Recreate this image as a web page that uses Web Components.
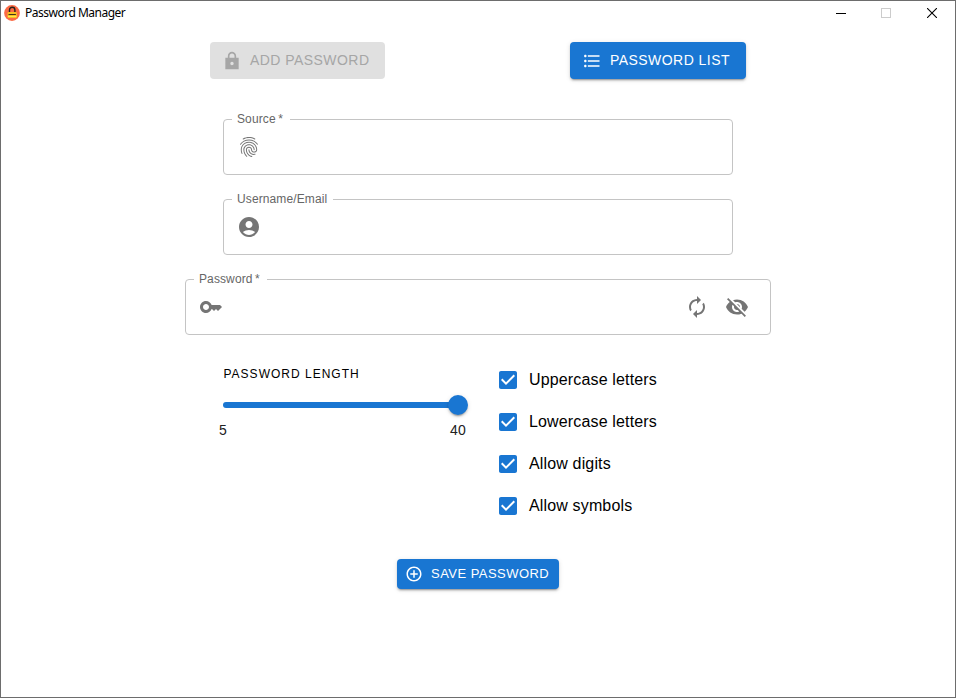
<!DOCTYPE html>
<html lang="en"><head><meta charset="utf-8"><title>Password Manager</title>
<style>
html,body{margin:0;height:100%}
body{font-family:"Liberation Sans",Arial,sans-serif;background:#fff;color:#000}
</style></head><body>
<password-app></password-app>
<script>
const ICONS={
lock:'M20 8h-3V6.21c0-2.61-1.91-4.94-4.51-5.19C9.51.74 7 3.08 7 6v2H4v14h16V8zm-8 9c-1.1 0-2-.9-2-2s.9-2 2-2 2 .9 2 2-.9 2-2 2zM9 8V6c0-1.66 1.34-3 3-3s3 1.34 3 3v2H9z',
list:'M4 10.5c-.83 0-1.5.67-1.5 1.5s.67 1.5 1.5 1.5 1.5-.67 1.5-1.5-.67-1.5-1.5-1.5zm0-6c-.83 0-1.5.67-1.5 1.5S3.17 7.5 4 7.5 5.500 6.830 5.500 6 4.830 4.500 4 4.500zm0 12c-.83 0-1.5.68-1.5 1.500s.68 1.500 1.500 1.500 1.500-.68 1.500-1.500-.67-1.500-1.500-1.500zM7 19h14v-2H7v2zm0-6h14v-2H7v2zm0-8v2h14V5H7z',
fingerprint:'M17.81 4.47c-.08 0-.16-.02-.23-.06C15.66 3.42 14 3 12.01 3c-1.98 0-3.86.47-5.57 1.41-.24.13-.54.04-.68-.2-.13-.24-.04-.55.2-.68C7.82 2.52 9.86 2 12.01 2c2.13 0 3.99.47 6.03 1.52.25.13.34.43.21.67-.09.18-.26.28-.44.28zM3.5 9.72c-.1 0-.2-.03-.29-.09-.23-.16-.28-.47-.12-.7.99-1.4 2.25-2.5 3.75-3.27C9.98 4.04 14 4.03 17.15 5.65c1.5.77 2.76 1.86 3.75 3.25.16.22.11.54-.12.7-.23.16-.54.11-.7-.12-.9-1.26-2.04-2.25-3.39-2.94-2.87-1.47-6.54-1.47-9.4.01-1.36.7-2.5 1.7-3.4 2.96-.08.14-.23.21-.39.21zm6.25 12.07c-.13 0-.26-.05-.35-.15-.87-.87-1.34-1.43-2.01-2.64-.69-1.23-1.05-2.73-1.05-4.34 0-2.97 2.54-5.39 5.66-5.39s5.66 2.42 5.66 5.39c0 .28-.22.5-.5.5s-.5-.22-.5-.5c0-2.42-2.09-4.39-4.66-4.39-2.57 0-4.66 1.97-4.66 4.39 0 1.44.32 2.77.93 3.85.64 1.15 1.08 1.64 1.85 2.42.19.2.19.51 0 .71-.11.1-.24.15-.37.15zm7.17-1.85c-1.19 0-2.24-.3-3.1-.89-1.49-1.01-2.38-2.65-2.38-4.39 0-.28.22-.5.5-.5s.5.22.5.5c0 1.41.72 2.74 1.94 3.56.71.48 1.54.71 2.54.71.24 0 .64-.03 1.04-.1.27-.05.53.13.58.41.05.27-.13.53-.41.58-.57.11-1.07.12-1.21.12zM14.91 22c-.04 0-.09-.01-.13-.02-1.59-.44-2.63-1.03-3.72-2.1-1.4-1.39-2.17-3.24-2.17-5.22 0-1.62 1.38-2.94 3.08-2.94 1.7 0 3.08 1.32 3.08 2.94 0 1.07.93 1.94 2.08 1.94s2.08-.87 2.08-1.94c0-3.77-3.25-6.83-7.25-6.83-2.84 0-5.44 1.58-6.61 4.03-.39.81-.59 1.76-.59 2.8 0 .78.07 2.01.67 3.61.1.26-.03.55-.29.64-.26.1-.55-.04-.64-.29-.49-1.31-.73-2.61-.73-3.96 0-1.2.23-2.29.68-3.24 1.33-2.79 4.28-4.6 7.51-4.6 4.55 0 8.25 3.51 8.25 7.83 0 1.62-1.38 2.94-3.08 2.94s-3.08-1.32-3.08-2.94c0-1.07-.93-1.94-2.08-1.94s-2.08.87-2.08 1.94c0 1.71.66 3.31 1.87 4.51.95.94 1.86 1.46 3.27 1.85.27.07.42.35.35.61-.05.23-.26.38-.47.38z',
account:'M12 2C6.48 2 2 6.48 2 12s4.48 10 10 10 10-4.48 10-10S17.52 2 12 2zm0 4c1.93 0 3.5 1.57 3.5 3.5S13.93 13 12 13s-3.5-1.57-3.5-3.5S10.07 6 12 6zm0 14c-2.03 0-4.43-.82-6.14-2.88C7.55 15.8 9.68 15 12 15s4.45.8 6.14 2.12C16.43 19.18 14.03 20 12 20z',
key:'M21 10h-8.35C11.83 7.67 9.61 6 7 6c-3.31 0-6 2.69-6 6s2.69 6 6 6c2.61 0 4.83-1.67 5.65-4H13l2 2 2-2 2 2 4-4.04L21 10zM7 15c-1.65 0-3-1.35-3-3s1.35-3 3-3 3 1.35 3 3-1.35 3-3 3z',
renew:'M12 6v3l4-4-4-4v3c-4.42 0-8 3.58-8 8 0 1.57.46 3.03 1.24 4.26L6.7 14.8c-.45-.83-.7-1.79-.7-2.8 0-3.31 2.69-6 6-6zm6.76 1.74L17.3 9.2c.44.84.7 1.79.7 2.8 0 3.31-2.69 6-6 6v-3l-4 4 4 4v-3c4.42 0 8-3.58 8-8 0-1.57-.46-3.03-1.24-4.26z',
hidden:'M12 7c2.76 0 5 2.24 5 5 0 .65-.13 1.26-.36 1.83l2.92 2.92c1.51-1.26 2.7-2.89 3.43-4.75-1.73-4.39-6-7.5-11-7.5-1.4 0-2.74.25-3.98.7l2.16 2.16C10.74 7.13 11.35 7 12 7zM2 4.27l2.28 2.28.46.46C3.08 8.3 1.78 10.02 1 12c1.73 4.39 6 7.5 11 7.5 1.55 0 3.03-.3 4.38-.84l.42.42L19.73 22 21 20.73 3.27 3 2 4.27zM7.53 9.8l1.55 1.55c-.05.21-.08.43-.08.65 0 1.66 1.34 3 3 3 .22 0 .44-.03.65-.08l1.55 1.55c-.67.33-1.41.53-2.2.53-2.76 0-5-2.24-5-5 0-.79.2-1.53.53-2.2zm4.31-.78l3.15 3.15.02-.16c0-1.66-1.34-3-3-3l-.17.01z',
plus:'M13 7h-2v4H7v2h4v4h2v-4h4v-2h-4V7zm-1-5C6.48 2 2 6.48 2 12s4.48 10 10 10 10-4.48 10-10S17.52 2 12 2zm0 18c-4.41 0-8-3.59-8-8s3.59-8 8-8 8 3.59 8 8-3.59 8-8 8z',
check:'M19 3H5c-1.11 0-2 .9-2 2v14c0 1.1.89 2 2 2h14c1.11 0 2-.9 2-2V5c0-1.1-.89-2-2-2zm-9 14l-5-5 1.41-1.41L10 14.17l7.59-7.59L19 8l-9 9z'};
const define=(name,render)=>customElements.define(name,class extends HTMLElement{
  connectedCallback(){ if(!this.shadowRoot) this.attachShadow({mode:'open'}).innerHTML=render(this); }
});
define('md-icon',el=>`<style>:host{display:block;flex:none;width:var(--icon,24px);height:var(--icon,24px)}svg{display:block;width:100%;height:100%;fill:currentColor}</style>
<svg viewBox="0 0 24 24"><path d="${ICONS[el.getAttribute('name')]}"/></svg>`);
define('title-bar',()=>`<style>
:host{display:flex;align-items:center;height:24px;padding-left:3px;font:12px "Noto Sans","Open Sans",sans-serif}
.name{flex:1;margin-left:5px;letter-spacing:-.5px;line-height:24px}
svg{display:block}.ctl{width:46px;display:flex;justify-content:center}
.ctl.min{width:44px;padding-left:2px}
</style>
<svg width="16" height="16" viewBox="0 0 16 16"><circle cx="8" cy="8" r="7.9" fill="#fb6a45"/><path d="M5.500 7V5a2.700 2.700 0 0 1 5.400 0V7" fill="none" stroke="#26221c" stroke-width="1.400"/><rect x="3.500" y="7" width="9.400" height="6" rx="1" fill="#f8bd20"/><path d="M4.500 9.500h7.400" stroke="#40331a"/><path d="M4 11.500h8.400" stroke="#ffe94e"/></svg>
<span class="name">Password Manager</span>
<span class="ctl min"><svg width="10" height="10"><path d="M0 5.500h10" stroke="#000"/></svg></span>
<span class="ctl"><svg width="10" height="10"><rect x=".5" y=".5" width="9" height="9" fill="none" stroke="#ccc"/></svg></span>
<span class="ctl"><svg width="10" height="10"><path d="M0 0l10 10M10 0L0 10" stroke="#000" stroke-width="1.100"/></svg></span>`);
define('md-button',el=>`<style>
:host{display:block}
button{display:flex;align-items:center;box-sizing:border-box;width:100%;height:37px;border:0;border-radius:4px;padding:0 0 0 12px;margin:0;background:#1976d2;color:#fff;font:14px "Liberation Sans",Arial,sans-serif;letter-spacing:.45px;white-space:nowrap;box-shadow:0 3px 1px -2px rgba(0,0,0,.2),0 2px 2px rgba(0,0,0,.14),0 1px 5px rgba(0,0,0,.12);--icon:20px}
button:disabled{background:#e0e0e0;color:#a6a6a6;box-shadow:none}
:host([small]) button{height:30px;padding-left:8px;font-size:13px;letter-spacing:.46px;--icon:18px}
md-icon{margin-right:8px}
.t{padding-bottom:2px}
</style><button ${el.hasAttribute('disabled')?'disabled':''}><md-icon name="${el.getAttribute('icon')}"></md-icon><span class="t"><slot></slot></span></button>`);
define('md-field',el=>`<style>
:host{display:flex;align-items:center;box-sizing:border-box;position:relative;height:56px;padding:0 21px 0 13px;border:1px solid #c4c4c4;border-radius:4px;color:#757575}
label{position:absolute;left:8px;top:-8px;height:14px;padding:0 0 0 5px;box-sizing:border-box;background:#fff;color:#666;font-size:12px;line-height:14px;letter-spacing:.11px;white-space:nowrap;width:${el.getAttribute('notch')}px}
.end{display:flex;gap:16px;margin-left:auto}
</style><label>${el.getAttribute('label')}</label><md-icon name="${el.getAttribute('icon')}"></md-icon><div class="end"><slot></slot></div>`);
define('md-slider',()=>`<style>
:host{display:block;width:235px}
h2{margin:0;font-size:12px;font-weight:400;line-height:16px;letter-spacing:1px;white-space:nowrap;padding-left:.5px}
.rail{display:flex;align-items:center;justify-content:flex-end;height:6px;border-radius:3px;background:#1976d2;margin-top:20px}
.thumb{flex:none;width:20px;height:20px;margin-right:-10px;border-radius:50%;background:#1976d2;box-shadow:0 3px 1px -2px rgba(0,0,0,.2),0 2px 2px rgba(0,0,0,.14),0 1px 5px rgba(0,0,0,.12)}
.marks{display:flex;justify-content:space-between;margin:14px -10px 0;font-size:14px;line-height:16px;letter-spacing:.15px;color:#212121}
.marks span{width:20px;text-align:center}
</style><h2>PASSWORD LENGTH</h2><div class="rail"><div class="thumb"></div></div><div class="marks"><span>5</span><span>40</span></div>`);
define('md-check',()=>`<style>:host{display:flex;align-items:center;height:42px;gap:9px;font-size:16px;letter-spacing:.15px}md-icon{color:#1976d2}.t{line-height:24px}</style><md-icon name="check"></md-icon><span class="t"><slot></slot></span>`);
define('password-app',()=>`<style>
:host{display:flex;flex-direction:column;box-sizing:border-box;height:698px;border:1px solid #6d6d6d;background:#fff}
main{display:flex;flex-direction:column;align-items:center}
nav{display:flex;justify-content:space-between;width:536px;margin-top:17px}
.fields{display:flex;flex-direction:column;align-items:center;gap:24px;margin-top:40px}
.opts{display:flex;width:510px;margin-top:24px}
md-slider{margin-top:7px}
.checks{margin-left:38px}
md-button[small]{margin-top:32px;width:162px}
</style>
<title-bar></title-bar>
<main>
<nav><md-button icon="lock" disabled style="width:175px">ADD PASSWORD</md-button><md-button icon="list" style="width:176px">PASSWORD LIST</md-button></nav>
<div class="fields">
<md-field style="width:510px" label="Source&thinsp;*" notch="58" icon="fingerprint"></md-field>
<md-field style="width:510px" label="Username/Email" notch="101" icon="account"></md-field>
<md-field style="width:586px" label="Password&thinsp;*" notch="73" icon="key"><md-icon name="renew"></md-icon><md-icon name="hidden"></md-icon></md-field>
</div>
<div class="opts"><md-slider></md-slider><div class="checks"><md-check>Uppercase letters</md-check><md-check>Lowercase letters</md-check><md-check>Allow digits</md-check><md-check>Allow symbols</md-check></div></div>
<md-button small icon="plus">SAVE PASSWORD</md-button>
</main>`);
</script></body></html>
